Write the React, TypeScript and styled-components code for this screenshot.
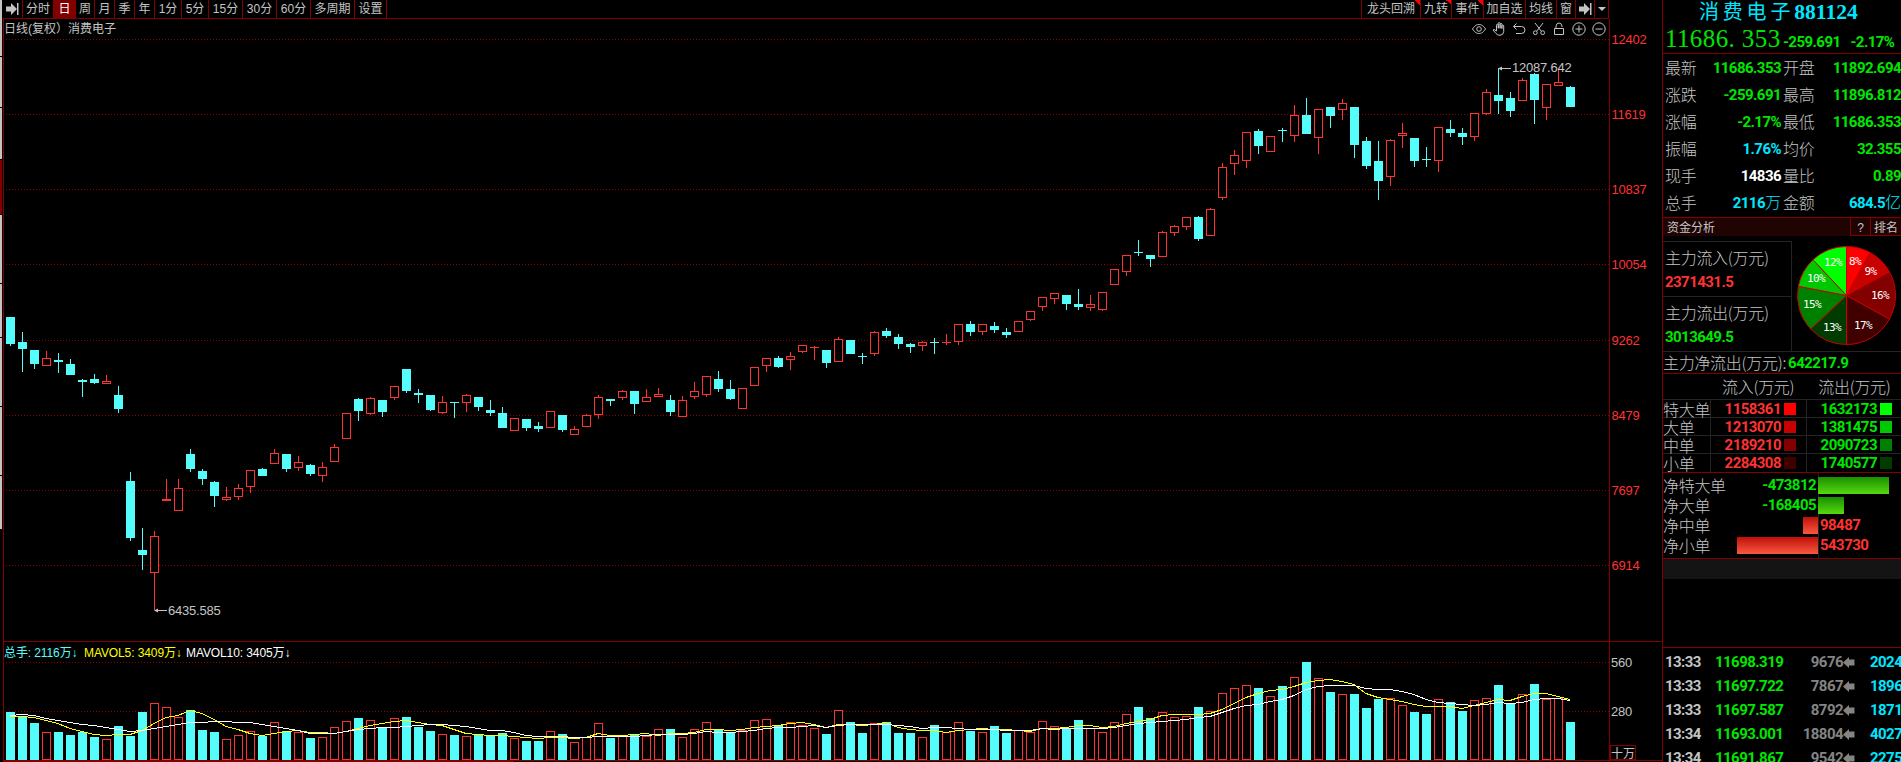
import React from 'react';
import styled, { createGlobalStyle } from 'styled-components';

const LINE = '#820000';
const UP = '#ff3232';
const DOWN = '#54fcfc';
const GREEN = '#00e600';
const CYAN = '#00e6ff';
const TEXT = '#c4c4c4';
const SANS = "'Liberation Sans', 'Noto Sans CJK SC', sans-serif";

const GlobalStyle = createGlobalStyle`
    * {
        box-sizing: border-box;
    }

    body {
        margin: 0;
        background: #000;
        color: ${TEXT};
        font-family: ${SANS};
        overflow: hidden;
    }
`;

const Page = styled.div`
    display: flex;
    width: 1901px;
    height: 762px;
    overflow: hidden;
`;

const Scrollbar = styled.div`
    flex: 0 0 3px;
    border-right: 1px solid #000;
    display: flex;
    flex-direction: column;
`;

const ScrollPart = styled.div<{ $height: number; $color: string }>`
    height: ${({ $height }) => $height}px;
    background: ${({ $color }) => $color};
    border-bottom: 1px solid #000;
`;

const Main = styled.main`
    flex: 0 0 1659px;
    display: flex;
    flex-direction: column;
`;

const Toolbar = styled.nav`
    display: flex;
    width: 1606px;
    height: 19px;
    border-bottom: 1px solid ${LINE};
`;

const ToolCell = styled.div<{ $width: number; $active?: boolean; $marked?: boolean }>`
    width: ${({ $width }) => $width}px;
    flex: none;
    display: flex;
    align-items: center;
    justify-content: center;
    padding-bottom: 1px;
    border-right: 1px solid ${LINE};
    font-size: 12px;
    line-height: 14px;
    white-space: nowrap;
    color: ${({ $active }) => ($active ? '#fff' : TEXT)};
    background: ${({ $active, $marked }) =>
        $active ? '#820000' : $marked ? 'linear-gradient(45deg, transparent 50%, #ff0000 50%) top right / 5px 5px no-repeat' : 'none'};
`;

const ToolGap = styled.div`
    flex: 1;
    border-right: 1px solid ${LINE};
`;

const ChartArea = styled.div`
    flex: 1;
    display: flex;
    border-left: 1px solid ${LINE};
`;

const PlotColumn = styled.div`
    flex: 0 0 1606px;
    border-right: 1px solid ${LINE};
`;

const AxisColumn = styled.div`
    flex: 1;
    padding-top: 20px;
`;

const ChartHeader = styled.div`
    display: flex;
    justify-content: space-between;
    align-items: center;
    height: 20px;
    font-size: 12px;
    line-height: 14px;
    white-space: pre;
    padding-bottom: 1px;
`;

const ChartTools = styled.div`
    display: flex;
    gap: 6px;
    padding-right: 3px;
`;

const Svg = styled.svg`
    display: block;
    overflow: visible;

    text {
        font-family: ${SANS};
        font-size: 13px;
        letter-spacing: -0.23px;
    }
`;

const VolumeLegend = styled.div`
    display: flex;
    height: 20px;
    align-items: center;
    border-top: 1px solid ${LINE};
    font-size: 12px;
    line-height: 14px;
    white-space: pre;
    letter-spacing: -0.1px;
    padding-top: 2px;
`;

const LegendItem = styled.span<{ $width: number; $color: string }>`
    width: ${({ $width }) => $width}px;
    color: ${({ $color }) => $color};
`;

const Side = styled.aside`
    flex: 0 0 239px;
    border-left: 1px solid ${LINE};
    overflow: hidden;
    font-family: ${SANS};
`;

const Num = styled.span<{ $color: string }>`
    font-family: Roboto, 'Noto Sans CJK SC', sans-serif;
    font-size: 15px;
    font-weight: 700;
    letter-spacing: -0.55px;
    line-height: 16px;
    text-align: right;
    white-space: nowrap;
    color: ${({ $color }) => $color};
`;

const Unit = styled.span`
    font-size: 16px;
    font-weight: 300;
    letter-spacing: 0;
`;

const Label = styled.span`
    font-family: 'Noto Sans CJK SC', sans-serif;
    font-size: 16px;
    font-weight: 300;
    line-height: 17px;
    letter-spacing: -0.3px;
    white-space: nowrap;
`;

const Title = styled.h1`
    display: flex;
    align-items: center;
    height: 24px;
    margin: 0;
    padding-left: 36px;
    font-size: 20px;
    font-weight: 400;
    line-height: 20px;
    letter-spacing: 3.8px;
    color: ${CYAN};
`;

const Code = styled.b`
    font-family: 'Liberation Serif', serif;
    font-size: 21.6px;
    letter-spacing: 0;
`;

const PriceRow = styled.div`
    display: flex;
    align-items: baseline;
    height: 30px;
    padding: 1px 0 0 2px;
    border-bottom: 1px solid ${LINE};
    color: ${GREEN};
`;

const BigPrice = styled.span`
    width: 118px;
    font-family: 'Liberation Serif', serif;
    font-size: 25px;
    line-height: 28px;
    letter-spacing: 0.4px;
    white-space: pre;
`;

const Stats = styled.div`
    display: grid;
    grid-template-columns: 33px 83px 33px 87px;
    grid-auto-rows: 27px;
    align-items: center;
    height: 163px;
    padding-left: 2px;

    & > :nth-child(4n + 3) {
        margin-left: 2px;
    }
`;

const SectionBar = styled.div`
    display: flex;
    height: 19px;
    border-top: 1px solid ${LINE};
    background: #200404;
    font-size: 12px;
    line-height: 20px;
`;

const SectionTitle = styled.div`
    width: 187px;
    padding-left: 4px;
`;

const SectionButton = styled.div`
    flex: 1 0 20px;
    border-left: 1px solid ${LINE};
    border-bottom: 1px solid ${LINE};
    text-align: center;
`;

const Flow = styled.div`
    display: flex;
    margin-top: 5px;
    height: 111px;
    border-bottom: 1px solid #242424;
`;

const FlowBoxes = styled.div`
    width: 129px;
    border-right: 1px solid #242424;
`;

const FlowBox = styled.div`
    display: flex;
    flex-direction: column;
    align-items: flex-start;
    gap: 8px;
    height: 55px;
    padding: 7px 0 0 2px;
    border-top: 1px solid #242424;
`;

const Pie = styled.svg`
    width: 109px;
    height: 110px;

    text {
        font-family: 'DejaVu Sans Mono', monospace;
        font-size: 11px;
        letter-spacing: -0.6px;
        fill: #fff;
        text-anchor: middle;
    }
`;

const NetTotal = styled.div`
    display: flex;
    align-items: center;
    gap: 2px;
    height: 22px;
    border-bottom: 1px solid ${LINE};
`;

const OrderHeader = styled.div`
    display: flex;
    align-items: center;
    gap: 24px;
    height: 25px;
    padding-left: 59px;
`;

const OrderRow = styled.div`
    display: grid;
    grid-template-columns: 48px 96px 1fr;
    height: 18px;
    border-top: 1px solid #242424;
`;

const OrderCell = styled.div<{ $numeric?: boolean }>`
    display: flex;
    align-items: center;
    justify-content: ${({ $numeric }) => ($numeric ? 'flex-end' : 'flex-start')};
    gap: 3px;
    padding-right: ${({ $numeric }) => ($numeric ? 10 : 0)}px;
    border-right: 1px solid #242424;
    height: 18px;

    &:last-child {
        border-right: 0;
        padding-right: 9px;
    }
`;

const Swatch = styled.i<{ $color: string }>`
    width: 12px;
    height: 12px;
    background: ${({ $color }) => $color};
`;

const NetBlock = styled.div`
    height: 87px;
    margin-top: 1px;
    padding-top: 2px;
    border-top: 1px solid ${LINE};
    border-bottom: 1px solid ${LINE};
    background: linear-gradient(#242424, #242424) 155px 0 / 1px 100% no-repeat;
`;

const NetRow = styled.div`
    display: grid;
    grid-template-columns: 155px 1fr;
    align-items: center;
    height: 20px;
`;

const NetHalf = styled.div<{ $end?: boolean }>`
    display: flex;
    align-items: center;
    justify-content: ${({ $end }) => ($end ? 'space-between' : 'flex-start')};
    gap: 2px;
    height: 20px;
`;

const Bar = styled.div<{ $up: boolean }>`
    height: 17px;
    background: ${({ $up }) => ($up ? 'linear-gradient(#c01008, #f85840)' : 'linear-gradient(#189000, #58d810)')};
`;

const GreyStrip = styled.div`
    height: 20px;
    background: #141414;
`;

const Ticks = styled.div`
    margin-top: 68px;
    padding-top: 2px;
    border-top: 1px solid ${LINE};
`;

const TickRow = styled.div`
    display: grid;
    grid-template-columns: 50px 78px 50px 27px 40px;
    align-items: center;
    height: 24px;
    padding-left: 2px;

    & > :nth-child(1),
    & > :nth-child(2) {
        text-align: left;
    }
`;

// direction, high, body top, body bottom, low
type Candle = [number, number, number, number, number];

const CANDLES: Candle[] = [
    [0, 317, 317, 344, 346], [0, 332, 342, 349, 372], [0, 350, 350, 364, 369], [1, 351, 358, 366, 366],
    [0, 353, 360, 362, 373], [0, 359, 364, 375, 375], [0, 379, 380, 382, 397], [0, 374, 379, 383, 384],
    [1, 375, 381, 384, 384], [0, 386, 395, 409, 413], [0, 472, 481, 538, 541], [0, 528, 550, 555, 570],
    [1, 531, 536, 573, 610], [1, 479, 499, 501, 501], [1, 479, 488, 511, 511], [0, 449, 454, 469, 472],
    [0, 469, 471, 479, 485], [0, 481, 482, 496, 507], [1, 487, 497, 500, 501], [1, 484, 488, 497, 500],
    [1, 470, 470, 487, 493], [0, 468, 469, 476, 476], [1, 449, 453, 464, 464], [0, 454, 454, 469, 472],
    [1, 456, 462, 468, 471], [0, 464, 465, 474, 476], [1, 462, 467, 476, 482], [1, 444, 447, 462, 462],
    [1, 413, 413, 439, 439], [0, 398, 399, 411, 421], [1, 397, 398, 414, 415], [0, 400, 400, 412, 417],
    [1, 386, 386, 398, 400], [0, 369, 369, 391, 393], [0, 389, 393, 395, 403], [0, 395, 395, 410, 411],
    [1, 396, 402, 413, 414], [0, 402, 402, 403, 418], [1, 394, 395, 403, 412], [0, 397, 397, 407, 411],
    [0, 400, 410, 413, 416], [0, 407, 413, 428, 428], [1, 418, 418, 431, 431], [0, 419, 419, 428, 431],
    [0, 422, 426, 429, 432], [1, 411, 411, 428, 428], [0, 415, 415, 430, 432], [1, 426, 429, 435, 435],
    [1, 414, 415, 427, 427], [1, 395, 397, 415, 419], [0, 399, 399, 401, 406], [1, 390, 391, 398, 400],
    [0, 391, 391, 404, 414], [1, 389, 397, 402, 402], [1, 388, 394, 397, 397], [0, 395, 400, 412, 416],
    [1, 396, 400, 417, 417], [1, 382, 391, 397, 399], [1, 376, 376, 395, 397], [0, 371, 379, 389, 392],
    [0, 380, 389, 399, 400], [1, 388, 388, 409, 409], [1, 367, 367, 386, 386], [1, 358, 358, 366, 372],
    [0, 356, 358, 367, 368], [1, 352, 356, 360, 370], [1, 345, 345, 352, 353], [1, 346, 347, 348, 360],
    [0, 350, 350, 363, 368], [1, 337, 339, 362, 362], [0, 340, 340, 354, 354], [0, 353, 356, 357, 364],
    [1, 331, 332, 354, 356], [0, 328, 331, 336, 338], [0, 334, 337, 344, 349], [0, 343, 344, 347, 353],
    [1, 341, 342, 346, 351], [0, 338, 342, 343, 354], [1, 334, 342, 343, 345], [1, 324, 324, 342, 345],
    [0, 321, 324, 332, 336], [1, 324, 324, 332, 335], [0, 322, 326, 330, 333], [0, 328, 332, 335, 338],
    [1, 321, 321, 332, 332], [1, 311, 311, 320, 321], [1, 297, 297, 307, 311], [1, 293, 293, 299, 304],
    [0, 295, 295, 304, 310], [0, 289, 304, 307, 310], [1, 295, 304, 308, 311], [1, 292, 292, 310, 311],
    [1, 269, 269, 285, 285], [1, 255, 255, 272, 276], [0, 240, 252, 253, 256], [0, 255, 255, 259, 267],
    [1, 231, 232, 257, 257], [1, 225, 226, 233, 236], [1, 217, 217, 227, 230], [0, 216, 217, 239, 241],
    [1, 208, 209, 236, 236], [1, 163, 167, 198, 200], [1, 150, 155, 164, 175], [1, 132, 132, 161, 168],
    [0, 129, 131, 146, 154], [1, 136, 136, 152, 152], [0, 128, 130, 131, 142], [1, 105, 115, 136, 142],
    [0, 98, 115, 134, 134], [1, 109, 109, 138, 154], [0, 107, 107, 116, 128], [1, 99, 103, 110, 120],
    [0, 107, 107, 145, 158], [0, 137, 141, 166, 169], [0, 141, 161, 181, 200], [1, 139, 140, 177, 186],
    [1, 123, 133, 136, 148], [0, 138, 138, 161, 167], [0, 147, 159, 160, 167], [1, 127, 127, 161, 172],
    [0, 120, 129, 133, 137], [0, 128, 133, 137, 145], [1, 113, 113, 137, 141], [1, 89, 92, 114, 115],
    [0, 68, 95, 101, 114], [0, 92, 98, 111, 117], [1, 78, 80, 101, 101], [0, 73, 74, 100, 124],
    [1, 84, 84, 108, 120], [1, 70, 82, 86, 86], [0, 86, 87, 107, 107],
];

const VOLUMES = [
    712, 717, 723, 732, 732, 735, 732, 737, 739, 726, 736, 712, 703, 707, 717, 710, 730, 732, 739, 735,
    731, 736, 722, 731, 732, 738, 737, 727, 721, 718, 720, 727, 718, 717, 727, 731, 734, 735, 736, 735,
    736, 733, 738, 741, 741, 731, 734, 742, 737, 723, 738, 736, 734, 736, 729, 729, 737, 729, 722, 730,
    733, 730, 720, 719, 725, 722, 725, 728, 734, 710, 722, 733, 723, 722, 733, 733, 737, 725, 732, 722,
    731, 732, 726, 733, 730, 732, 721, 726, 728, 720, 728, 732, 722, 714, 707, 718, 712, 717, 716, 707,
    711, 693, 688, 685, 688, 696, 686, 677, 662, 678, 692, 694, 694, 708, 699, 698, 705, 712, 714, 699,
    702, 711, 700, 698, 685, 704, 694, 684, 699, 698, 722,
];

const PRICE_LINES = [
    [39, '12402'], [114, '11619'], [189, '10837'], [264, '10054'],
    [340, '9262'], [415, '8479'], [490, '7697'], [565, '6914'],
] as const;

const average = (size: number, head: number[]) =>
    VOLUMES.map((_, i) => {
        const y = i < size - 1 ? head[i] : VOLUMES.slice(i - size + 1, i + 1).reduce((a, b) => a + b, 0) / size;
        return `${10 + i * 12},${Math.round(y) + 0.5}`;
    }).join(' ');

const MA5 = average(5, [716, 716, 717, 720]);
const MA10 = average(10, [715, 714, 715, 718, 720, 722, 724, 725, 727]);

const LEFT_TOOLS: [string, number][] = [
    ['分时', 31], ['日', 22], ['周', 19], ['月', 20], ['季', 20], ['年', 20], ['1分', 27],
    ['5分', 27], ['15分', 34], ['30分', 34], ['60分', 34], ['多周期', 44], ['设置', 32],
];

const RIGHT_TOOLS: [string, number, boolean][] = [
    ['龙头回溯', 59, true], ['九转', 31, true], ['事件', 32, true], ['加自选', 42, false], ['均线', 31, false], ['窗', 19, false],
];

const STATS: [string, string, string, string][] = [
    ['最新', '11686.353', GREEN, ''], ['开盘', '11892.694', GREEN, ''],
    ['涨跌', '-259.691', GREEN, ''], ['最高', '11896.812', GREEN, ''],
    ['涨幅', '-2.17%', GREEN, ''], ['最低', '11686.353', GREEN, ''],
    ['振幅', '1.76%', CYAN, ''], ['均价', '32.355', GREEN, ''],
    ['现手', '14836', '#fff', ''], ['量比', '0.89', GREEN, ''],
    ['总手', '2116', CYAN, '万'], ['金额', '684.5', CYAN, '亿'],
];

// share, fill, label x, label baseline
const SLICES: [number, string, number, number][] = [
    [8, '#ff0000', 63, 24], [9, '#c80000', 78.5, 34], [16, '#820000', 88, 58], [17, '#400000', 71, 88],
    [13, '#003c00', 40, 90], [15, '#008000', 20, 67], [10, '#00c800', 24, 41], [12, '#00ff00', 41, 25],
];

const ORDERS = [
    ['特大单', '1158361', '#ff0000', '1632173', '#00ff00'],
    ['大单', '1213070', '#c80000', '1381475', '#00c800'],
    ['中单', '2189210', '#820000', '2090723', '#008000'],
    ['小单', '2284308', '#400000', '1740577', '#003c00'],
];

const NETS: [string, string, number][] = [
    ['净特大单', '-473812', -71], ['净大单', '-168405', -26], ['净中单', '98487', 15], ['净小单', '543730', 81],
];

const TICKS = [
    ['13:33', '11698.319', '9676', '2024'],
    ['13:33', '11697.722', '7867', '1896'],
    ['13:33', '11697.587', '8792', '1871'],
    ['13:34', '11693.001', '18804', '4027'],
    ['13:34', '11691.867', '9542', '2275'],
];

const JumpIcon = () => (
    <svg width="13" height="12" viewBox="0 0 13 12" fill={TEXT}>
        <path d="M0 3.500h5V0l6 6-6 6V8.500H0z" />
        <path d="M11 0h1.500v12H11z" />
    </svg>
);

const ToolIcon: React.FC<{ children: React.ReactNode }> = ({ children }) => (
    <svg width="14" height="14" viewBox="0 0 14 14" fill="none" stroke={TEXT} strokeWidth="1">
        {children}
    </svg>
);

const GridLine: React.FC<{ y: number }> = ({ y }) => (
    <path d={`M6 ${y + 0.5}H1609`} stroke="#8c0000" strokeDasharray="1 2" shapeRendering="crispEdges" />
);

const PriceChart = () => (
    <Svg width="1605" height="602" viewBox="4 39 1605 602">
        {PRICE_LINES.map(([y]) => (
            <GridLine key={y} y={y} />
        ))}
        <g shapeRendering="crispEdges">
            {CANDLES.map(([up, high, top, bottom, low], i) => {
                const x = 6 + i * 12;
                const color = up ? UP : DOWN;
                const hollow = up === 1 && bottom - top > 2;
                return (
                    <g key={i} fill={color}>
                        <rect x={x + 4} y={high} width="1" height={low - high} />
                        {hollow ? (
                            <rect x={x + 0.5} y={top + 0.5} width="8" height={bottom - top - 1} fill="#000" stroke={color} />
                        ) : (
                            <rect x={x} y={top} width="9" height={bottom - top} />
                        )}
                    </g>
                );
            })}
        </g>
        <g fill={TEXT} stroke="none">
            <path d="M154 610.500l4-2v1.500h9v1h-9v1.500z" />
            <text x="168" y="615">6435.585</text>
            <path d="M1498 68.500l4-2v1.500h9v1h-9v1.500z" />
            <text x="1512" y="72">12087.642</text>
        </g>
    </Svg>
);

const VolumeChart = () => (
    <Svg width="1605" height="101" viewBox="4 661 1605 101">
        <GridLine y={662} />
        <GridLine y={711} />
        <g shapeRendering="crispEdges">
            {VOLUMES.map((top, i) => {
                const x = 6 + i * 12;
                return CANDLES[i][0] ? (
                    <rect key={i} x={x + 0.5} y={top + 0.5} width="8" height={759 - top} fill="#000" stroke={UP} />
                ) : (
                    <rect key={i} x={x} y={top} width="9" height={760 - top} fill={DOWN} />
                );
            })}
            <polyline points={MA5} fill="none" stroke="#ffff00" />
            <polyline points={MA10} fill="none" stroke="#fff" />
            <path d="M3 760.500H1609" stroke={LINE} />
            <path d="M3 761.500H514" stroke={LINE} />
        </g>
    </Svg>
);

const Axis = () => (
    <Svg width="52" height="723" viewBox="1610 39 52 723">
        {PRICE_LINES.map(([y, label]) => (
            <text key={y} x="1611.500" y={y + 5} fill={UP}>
                {label}
            </text>
        ))}
        <path d="M1609 641.500h54M1609 760.500h54" stroke={LINE} />
        <text x="1611" y="667" fill={TEXT}>560</text>
        <text x="1611" y="716" fill={TEXT}>280</text>
        <rect x="1610.500" y="745.500" width="25" height="14" fill="none" stroke={LINE} />
        <text x="1611" y="757.500" fill={TEXT} style={{ fontSize: 12, letterSpacing: 0 }}>十万</text>
    </Svg>
);

const FlowPie = () => {
    const cx = 54.5;
    const cy = 54.5;
    const r = 49;
    const point = (share: number) => {
        const a = (share / 100) * Math.PI * 2;
        return `${cx + r * Math.sin(a)} ${cy - r * Math.cos(a)}`;
    };
    let sum = 0;
    return (
        <Pie viewBox="0 0 109 110">
            {SLICES.map(([share, color]) => {
                const from = sum;
                sum += share;
                return (
                    <path
                        key={color}
                        d={`M${cx} ${cy}L${point(from)}A${r} ${r} 0 0 1 ${point(sum)}Z`}
                        fill={color}
                        stroke="#c80000"
                    />
                );
            })}
            {SLICES.map(([share, color, x, y]) => (
                <text key={color} x={x} y={y}>{`${share}%`}</text>
            ))}
        </Pie>
    );
};

const ChartToolbar = () => (
    <Toolbar>
        <ToolCell $width={20}>
            <JumpIcon />
        </ToolCell>
        {LEFT_TOOLS.map(([name, width]) => (
            <ToolCell key={name} $width={width} $active={name === '日'}>
                {name}
            </ToolCell>
        ))}
        <ToolGap />
        {RIGHT_TOOLS.map(([name, width, marked]) => (
            <ToolCell key={name} $width={width} $marked={marked}>
                {name}
            </ToolCell>
        ))}
        <ToolCell $width={19}>
            <JumpIcon />
        </ToolCell>
        <ToolCell $width={14}>
            <svg width="8" height="4" viewBox="0 0 8 4" fill={TEXT}>
                <path d="M0 0h8L4 4z" />
            </svg>
        </ToolCell>
    </Toolbar>
);

const ChartIcons = () => (
    <ChartTools>
        <ToolIcon>
            <path d="M.5 7C3 3.200 5 2.500 7 2.500S11 3.200 13.500 7C11 10.800 9 11.500 7 11.500S3 10.800.5 7z" />
            <circle cx="7" cy="7" r="2.300" />
        </ToolIcon>
        <ToolIcon>
            <path d="M4.500 9V3.200a.9.900 0 0 1 1.800 0V6.500M6.300 6V1.500a.9.900 0 0 1 1.800 0V6.500M8.100 6V2.300a.9.900 0 0 1 1.800 0V7M9.900 6V4a.9.900 0 0 1 1.800 0V9.500Q11.500 13.300 8 13.300 5.500 13.300 4 11.500L1 8Q1.500 6.500 4.500 9" />
        </ToolIcon>
        <ToolIcon>
            <path d="M4.500 1.500L1.500 4.500 4.500 7.500M1.500 4.500H9.500A3.500 3.500 0 0 1 9.500 11.500H4" />
        </ToolIcon>
        <ToolIcon>
            <path d="M3 1L9.500 9.500M11 1L4.500 9.500" />
            <circle cx="3.300" cy="10.700" r="1.900" />
            <circle cx="10.700" cy="10.700" r="1.900" />
        </ToolIcon>
        <ToolIcon>
            <path d="M2.500 6.500h9v6h-9zM4 6V4Q4.500 1 7 1T10 4V5" />
        </ToolIcon>
        <ToolIcon>
            <circle cx="7" cy="7" r="6.200" />
            <path d="M3.500 7h7M7 3.500v7" />
        </ToolIcon>
        <ToolIcon>
            <circle cx="7" cy="7" r="6.200" />
            <path d="M3.500 7h7" />
        </ToolIcon>
    </ChartTools>
);

const QuotePanel = () => (
    <Side>
        <Title>
            消费电子<Code>881124</Code>
        </Title>
        <PriceRow>
            <BigPrice>11686. 353</BigPrice>
            <Num $color={GREEN}>-259.691</Num>
            <Num $color={GREEN} style={{ marginLeft: 10 }}>-2.17%</Num>
        </PriceRow>
        <Stats>
            {STATS.map(([label, value, color, unit]) => (
                <React.Fragment key={label}>
                    <Label>{label}</Label>
                    <Num $color={color}>
                        {value}
                        {unit && <Unit>{unit}</Unit>}
                    </Num>
                </React.Fragment>
            ))}
        </Stats>
        <SectionBar>
            <SectionTitle>资金分析</SectionTitle>
            <SectionButton>?</SectionButton>
            <SectionButton style={{ flexBasis: 31 }}>排名</SectionButton>
        </SectionBar>
        <Flow>
            <FlowBoxes>
                <FlowBox>
                    <Label>主力流入(万元)</Label>
                    <Num $color={UP}>2371431.5</Num>
                </FlowBox>
                <FlowBox>
                    <Label>主力流出(万元)</Label>
                    <Num $color={GREEN}>3013649.5</Num>
                </FlowBox>
            </FlowBoxes>
            <FlowPie />
        </Flow>
        <NetTotal>
            <Label>主力净流出(万元):</Label>
            <Num $color={GREEN}>642217.9</Num>
        </NetTotal>
        <OrderHeader>
            <Label>流入(万元)</Label>
            <Label>流出(万元)</Label>
        </OrderHeader>
        {ORDERS.map(([label, inflow, inColor, outflow, outColor]) => (
            <OrderRow key={label}>
                <OrderCell>
                    <Label>{label}</Label>
                </OrderCell>
                <OrderCell $numeric>
                    <Num $color={UP}>{inflow}</Num>
                    <Swatch $color={inColor} />
                </OrderCell>
                <OrderCell $numeric>
                    <Num $color={GREEN}>{outflow}</Num>
                    <Swatch $color={outColor} />
                </OrderCell>
            </OrderRow>
        ))}
        <NetBlock>
            {NETS.map(([label, value, size]) => (
                <NetRow key={label}>
                    <NetHalf $end>
                        <Label>{label}</Label>
                        {size < 0 ? <Num $color={GREEN} style={{ paddingRight: 2 }}>{value}</Num> : <Bar $up style={{ width: size }} />}
                    </NetHalf>
                    <NetHalf>
                        {size < 0 ? <Bar $up={false} style={{ width: -size }} /> : <Num $color={UP} style={{ paddingLeft: 2 }}>{value}</Num>}
                    </NetHalf>
                </NetRow>
            ))}
        </NetBlock>
        <GreyStrip />
        <Ticks>
            {TICKS.map(([time, price, volume, amount], i) => (
                <TickRow key={i}>
                    <Num $color={TEXT}>{time}</Num>
                    <Num $color={GREEN}>{price}</Num>
                    <Num $color="#848484">{volume}</Num>
                    <svg width="12" height="11" viewBox="0 0 12 11" fill="#848484">
                        <path d="M0 5.500L6 0v2.500h5.500v6H6V11z" />
                    </svg>
                    <Num $color={CYAN} style={{ textAlign: 'left' }}>{amount}</Num>
                </TickRow>
            ))}
        </Ticks>
    </Side>
);

export default function App() {
    return (
        <Page>
            <GlobalStyle />
            <Scrollbar>
                <ScrollPart $height={57} $color="#c4c4c4" />
                <ScrollPart $height={51} $color="#c4c4c4" />
                <ScrollPart $height={52} $color="#c4c4c4" />
                <ScrollPart $height={55} $color="#820000" />
                <ScrollPart $height={69} $color="#c4c4c4" />
                <ScrollPart $height={54} $color="#c4c4c4" />
                <ScrollPart $height={69} $color="#c4c4c4" />
                <ScrollPart $height={69} $color="#c4c4c4" />
                <ScrollPart $height={54} $color="#c4c4c4" />
            </Scrollbar>
            <Main>
                <ChartToolbar />
                <ChartArea>
                    <PlotColumn>
                        <ChartHeader>
                            <span>日线(复权）消费电子</span>
                            <ChartIcons />
                        </ChartHeader>
                        <PriceChart />
                        <VolumeLegend>
                            <LegendItem $width={80} $color={DOWN}>总手: 2116万↓</LegendItem>
                            <LegendItem $width={102} $color="#ffff00">MAVOL5: 3409万↓</LegendItem>
                            <LegendItem $width={120} $color="#fff">MAVOL10: 3405万↓</LegendItem>
                        </VolumeLegend>
                        <VolumeChart />
                    </PlotColumn>
                    <AxisColumn>
                        <Axis />
                    </AxisColumn>
                </ChartArea>
            </Main>
            <QuotePanel />
        </Page>
    );
}
